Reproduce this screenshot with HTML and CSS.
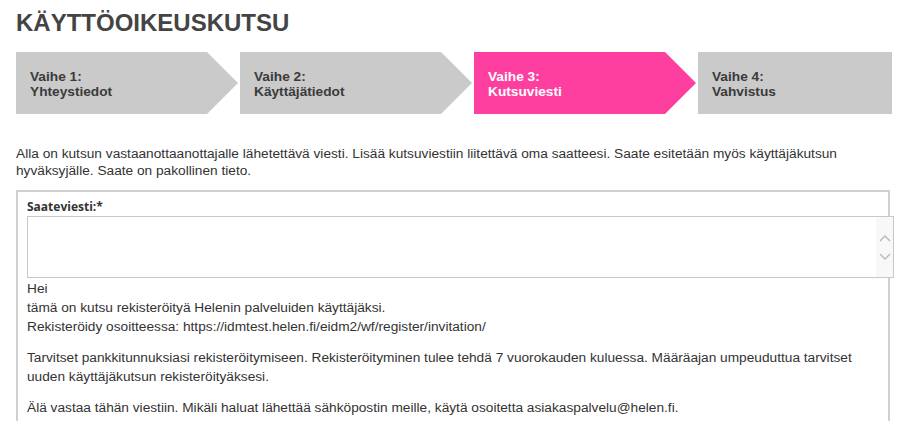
FILE: index.html
```html
<html>
	<head>
		<link rel="stylesheet" href="styles.css">
	</head>
	<body>
		<div class="page">
			<h1 class="title">KÄYTTÖOIKEUSKUTSU</h1>
			<ol class="steps">
				<li class="step arrow w1">Vaihe 1:<br/>Yhteystiedot</li>
				<li class="step arrow w2">Vaihe 2:<br/>Käyttäjätiedot</li>
				<li class="step arrow w1 current">Vaihe 3:<br/>Kutsuviesti</li>
				<li class="step w4">Vaihe 4:<br/>Vahvistus</li>
			</ol>
			<p class="intro">Alla on kutsun vastaanottaanottajalle lähetettävä viesti. Lisää kutsuviestiin liitettävä oma saatteesi. Saate esitetään myös käyttäjäkutsun hyväksyjälle. Saate on pakollinen tieto.</p>
			<div class="box">
				<label class="fieldLabel">Saateviesti:*</label>
				<div class="textarea">
					<div class="scroll">
						<svg width="14" height="40" viewBox="0 0 14 40"><path d="M2 14 L7 9 L12 14" fill="none" stroke="#b8b8b8" stroke-width="1.3"/><path d="M2 27 L7 32 L12 27" fill="none" stroke="#b8b8b8" stroke-width="1.3"/></svg>
					</div>
				</div>
				<div class="message">
					<div>Hei</div>
					<div>tämä on kutsu rekisteröityä Helenin palveluiden käyttäjäksi.</div>
					<div>Rekisteröidy osoitteessa: https://idmtest.helen.fi/eidm2/wf/register/invitation/</div>
					<p>Tarvitset pankkitunnuksiasi rekisteröitymiseen. Rekisteröityminen tulee tehdä 7 vuorokauden kuluessa. Määräajan umpeuduttua tarvitset uuden käyttäjäkutsun rekisteröityäksesi.</p>
					<p>Älä vastaa tähän viestiin. Mikäli haluat lähettää sähköpostin meille, käytä osoitetta asiakaspalvelu@helen.fi.</p>
				</div>
			</div>
		</div>
	</body>
</html>
```
FILE: styles.css
```css
body{ margin: 0; background: #ffffff; font-family: "Liberation Sans", Arial, sans-serif; color: #333333; }
.page{ padding: 0 8px 0 16px; }
.title{ margin: 0; padding-top: 9px; height: 43px; font-size: 24px; font-weight: bold; color: #444444; }
.steps{ list-style: none; margin: 0; padding: 0; display: flex; height: 62px; }
.step{ box-sizing: border-box; height: 62px; background: #cacaca; color: #3b3b3b; font-size: 13.7px; font-weight: bold; line-height: 15px; padding: 17px 0 0 14px; margin-right: 2px; }
.arrow{ clip-path: polygon(0 0, calc(100% - 31px) 0, 100% 50%, calc(100% - 31px) 100%, 0 100%); }
.w1{ width: 222px; }
.w2{ width: 232px; }
.w4{ width: 194px; margin-right: 0; }
.current{ background: #fe3f9f; color: #ffffff; }
.intro{ margin: 31px 0 0 0; font-size: 13.7px; line-height: 17px; color: #333333; width: 850px; }
.box{ margin-top: 11px; border: 2px solid #d0d0d0; border-bottom: none; height: 240px; padding: 7px 0 0 9px; width: 874px; box-sizing: border-box; }
.fieldLabel{ display: block; font-family: "Open Sans", sans-serif; font-weight: bold; font-size: 12px; line-height: 16px; color: #333333; }
.textarea{ margin-top: 1px; height: 62px; border: 1px solid #c8c8c8; box-sizing: border-box; width: 867px; display: flex; justify-content: flex-end; background: #ffffff; }
.scroll{ width: 17px; background: #f8f8f8; display: flex; align-items: center; justify-content: center; }
.message{ font-size: 13.7px; line-height: 19px; color: #333333; padding-top: 1px; }
.message p{ margin: 12px 0 0 0; width: 850px; }
```
